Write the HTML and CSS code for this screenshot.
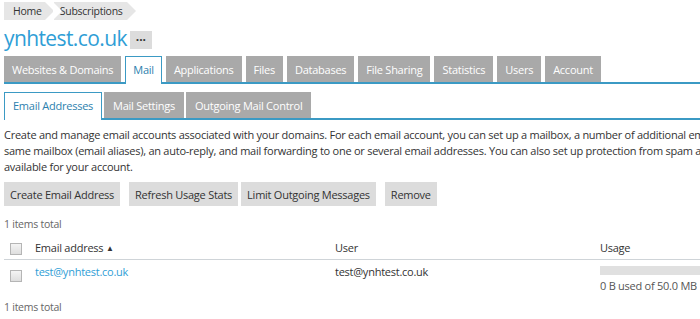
FILE: index.html
```html
<!DOCTYPE html>
<html lang="en">
<head>
  <meta charset="UTF-8" />
  <meta name="viewport" content="width=device-width, initial-scale=1.0" />
  <title>Mail - ynhtest.co.uk</title>
  <link rel="stylesheet" href="styles.css">
</head>
<body>
  <div class="page">
    <div class="breadcrumbs">
      <a class="crumb" href="#">Home</a>
      <a class="crumb" href="#">Subscriptions</a>
    </div>

    <div class="page-title">
      <h1>ynhtest.co.uk</h1>
      <button class="more-btn">&middot;&middot;&middot;</button>
    </div>

    <ul class="tabs main-tabs">
      <li><a href="#">Websites &amp; Domains</a></li>
      <li class="active"><a href="#">Mail</a></li>
      <li><a href="#">Applications</a></li>
      <li><a href="#">Files</a></li>
      <li><a href="#">Databases</a></li>
      <li><a href="#">File Sharing</a></li>
      <li><a href="#">Statistics</a></li>
      <li><a href="#">Users</a></li>
      <li><a href="#">Account</a></li>
    </ul>

    <ul class="tabs sub-tabs">
      <li class="active"><a href="#">Email Addresses</a></li>
      <li><a href="#">Mail Settings</a></li>
      <li><a href="#">Outgoing Mail Control</a></li>
    </ul>

    <p class="hint">Create and manage email accounts associated with your domains. For each email account, you can set up a mailbox, a number of additional email addresses that deliver mail to the same mailbox (email aliases), an auto-reply, and mail forwarding to one or several email addresses. You can also set up protection from spam and viruses if these services are available for your account.</p>

    <div class="toolbar">
      <button class="btn">Create Email Address</button>
      <div class="btn-group">
        <button class="btn">Refresh Usage Stats</button>
        <button class="btn">Limit Outgoing Messages</button>
      </div>
      <button class="btn">Remove</button>
    </div>

    <div class="total">1 items total</div>

    <table class="list">
      <thead>
        <tr>
          <th class="col-check"><span class="checkbox"></span></th>
          <th class="col-email">Email address <span class="sort">&#9650;</span></th>
          <th class="col-user">User</th>
          <th class="col-usage">Usage</th>
        </tr>
      </thead>
      <tbody>
        <tr>
          <td class="col-check"><span class="checkbox"></span></td>
          <td class="col-email"><a href="#">test@ynhtest.co.uk</a></td>
          <td class="col-user">test@ynhtest.co.uk</td>
          <td class="col-usage">
            <div class="usage-bar"><div class="usage-fill" style="width: 0%"></div></div>
            <div class="usage-text">0 B used of 50.0 MB</div>
          </td>
        </tr>
      </tbody>
    </table>

    <div class="total total-bottom">1 items total</div>
  </div>
</body>
</html>
```

FILE: styles.css
```css
html, body {
  overflow: hidden;
}
body {
  margin: 0;
  font-family: "Open Sans", Arial, sans-serif;
  font-size: 11px;
  letter-spacing: -0.25px;
  color: #333;
  background: #fff;
}
a {
  text-decoration: none;
}
.page {
  width: 880px;
  padding: 2px 4px;
}

/* breadcrumbs */
.breadcrumbs {
  display: flex;
  height: 18px;
}
.crumb {
  position: relative;
  display: flex;
  align-items: center;
  padding: 0 4px 0 6px;
  margin-right: 9px;
  background: #e6e6e6;
  color: #333;
  font-size: 10.5px;
}
.crumb:first-child {
  padding: 0 3px 0 9px;
}
.crumb::after {
  content: "";
  position: absolute;
  right: -9px;
  top: 0;
  border-style: solid;
  border-width: 9px 0 9px 9px;
  border-color: transparent transparent transparent #e6e6e6;
}
.crumb + .crumb::before {
  content: "";
  position: absolute;
  left: -1px;
  top: 0;
  border-style: solid;
  border-width: 9px 0 9px 9px;
  border-color: transparent transparent transparent #fff;
}

/* title */
.page-title {
  display: flex;
  align-items: center;
  gap: 3px;
  margin-top: 4px;
  height: 28px;
}
.page-title h1 {
  margin: 0;
  font-size: 21px;
  letter-spacing: -0.6px;
  font-weight: normal;
  color: #2f9ed6;
  line-height: 28px;
}
.more-btn {
  width: 22px;
  height: 18px;
  padding: 0;
  border: none;
  background: #dcdcdc;
  color: #333;
  font-family: inherit;
  font-size: 12px;
  font-weight: bold;
  line-height: 18px;
  margin-top: 3px;
}

/* tabs */
.tabs {
  display: flex;
  gap: 4px;
  margin: 0;
  padding: 0;
  list-style: none;
  border-bottom: 2px solid #3b9ac4;
}
.tabs li a {
  display: block;
  padding: 0 7px;
  height: 25px;
  line-height: 26px;
  background: #a9a9a9;
  color: #fff;
  border: 1px solid #a9a9a9;
  border-bottom: none;
}
.tabs li.active a {
  background: #fff;
  color: #2d7fae;
  border-color: #3b9ac4;
  position: relative;
  margin-bottom: -2px;
  padding-bottom: 2px;
}
.main-tabs {
  margin-top: 4px;
}
.sub-tabs {
  margin-top: 8px;
  gap: 2px;
}
.sub-tabs li a {
  padding: 0 8px;
}

/* description */
.hint {
  margin: 7px 0 0;
  line-height: 16px;
}

/* toolbar */
.toolbar {
  display: flex;
  gap: 9px;
  margin-top: 7px;
}
.btn-group {
  display: flex;
  gap: 3px;
}
.btn {
  height: 24px;
  padding: 0 6px;
  border: none;
  background: #dcdcdc;
  color: #333;
  font-family: inherit;
  font-size: 11px;
  letter-spacing: -0.25px;
}
.total {
  margin-top: 10px;
  font-size: 10.5px;
  color: #666;
  line-height: 16px;
}
.total-bottom {
  margin-top: 4px;
}

/* list */
.list {
  width: 100%;
  border-collapse: collapse;
  margin-top: 4px;
}
.list th {
  text-align: left;
  font-weight: normal;
  height: 23px;
  border-bottom: 1px solid #cfd4d8;
  padding: 0;
  vertical-align: middle;
}
.list td {
  padding: 6px 0 2px;
  vertical-align: top;
}
.col-check {
  width: 25px;
  padding-left: 6px !important;
}
.col-email {
  width: 300px;
}
.col-user {
  width: 265px;
}
.checkbox {
  display: inline-block;
  width: 10px;
  height: 10px;
  border: 1px solid #b5b5b5;
  background: linear-gradient(#f4f4f4, #dedede);
  vertical-align: middle;
}
.list td .checkbox {
  margin-top: 1px;
}
.list td.col-email,
.list td.col-user {
  padding-top: 4px;
}
.list td a {
  color: #2f9ed6;
}
.sort {
  font-size: 8px;
  vertical-align: 1px;
}
.usage-bar {
  height: 9px;
  background: #e0e0e0;
}
.usage-fill {
  height: 100%;
  background: #5db0e0;
}
.usage-text {
  margin-top: 3px;
  color: #555;
}
```
